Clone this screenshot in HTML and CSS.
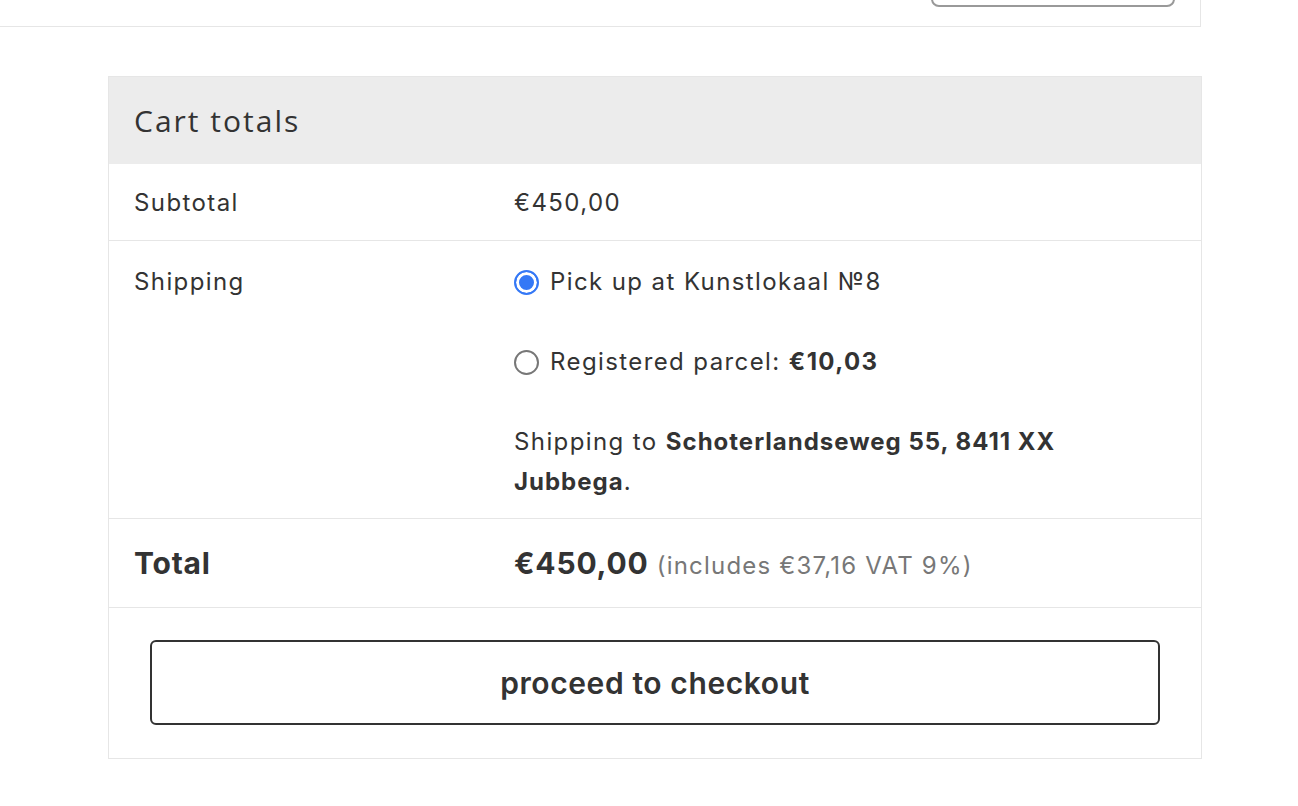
FILE: index.html
```html
<!DOCTYPE html>
<html lang="en">
<head>
    <meta charset="UTF-8">
    <meta name="viewport" content="width=device-width, initial-scale=1.0">
    <title>Cart</title>
    <link rel="stylesheet" href="styles.css">
</head>
<body>
    <!-- cart table ends just above -->
    <div class="cart-top">
        <div class="coupon-area">
            <button class="update-btn" aria-label="Update cart"></button>
        </div>
    </div>

    <div class="cart-totals">
        <h2>Cart totals</h2>

        <div class="row">
            <div class="label">Subtotal</div>
            <div class="value">€450,00</div>
        </div>

        <div class="row shipping">
            <div class="label">Shipping</div>
            <div class="value">
                <ul class="shipping-methods">
                    <li>
                        <input type="radio" name="shipping" id="pickup" checked>
                        <label for="pickup">Pick up at Kunstlokaal №8</label>
                    </li>
                    <li>
                        <input type="radio" name="shipping" id="parcel">
                        <label for="parcel">Registered parcel: <strong>€10,03</strong></label>
                    </li>
                </ul>
                <p class="destination">Shipping to <strong>Schoterlandseweg 55, 8411 XX</strong> <strong>Jubbega</strong>.</p>
            </div>
        </div>

        <div class="row total">
            <div class="label">Total</div>
            <div class="value"><strong>€450,00</strong> <small>(includes €37,16 VAT 9%)</small></div>
        </div>

        <div class="checkout">
            <button class="checkout-btn">proceed to checkout</button>
        </div>
    </div>
</body>
</html>
```

FILE: styles.css
```css
body {
    margin: 0;
    background: #fff;
    color: #333;
    font-family: 'Inter', 'Noto Sans', sans-serif;
    font-size: 24px;
    letter-spacing: 1.4px;
}

.cart-top {
    width: 1200px;
    height: 26px;
    border-right: 1px solid #e6e6e6;
    border-bottom: 1px solid #e6e6e6;
    overflow: hidden;
}

.coupon-area {
    display: flex;
    justify-content: flex-end;
    padding-right: 25px;
}

.update-btn {
    width: 244px;
    height: 60px;
    margin-top: -53px;
    border: 2px solid #999;
    border-radius: 8px;
    background: #fff;
}

.cart-totals {
    width: 1092px;
    margin: 49px 0 0 108px;
    border: 1px solid #e6e6e6;
}

h2 {
    margin: 0;
    height: 87px;
    padding: 0 25px;
    background: #ececec;
    font-family: 'Open Sans', sans-serif;
    font-weight: 400;
    font-size: 30px;
    letter-spacing: 2px;
    line-height: 87px;
    color: #333;
}

.row {
    display: grid;
    grid-template-columns: 380px 1fr;
    border-bottom: 1px solid #e6e6e6;
    line-height: 40px;
}

.label, .value {
    padding: 19px 25px 17px;
}

.shipping .label, .shipping .value {
    padding: 21px 25px 16px;
}

.shipping-methods {
    list-style: none;
    margin: 0;
    padding: 0;
}

.shipping-methods li {
    display: flex;
    align-items: center;
    margin-bottom: 40px;
}

.shipping-methods input {
    appearance: none;
    width: 25px;
    height: 25px;
    margin: 0 11px 0 0;
    border: 2px solid #777;
    border-radius: 50%;
    background: #fff;
}

.shipping-methods input:checked {
    border-color: #3478f6;
    background: #3478f6;
    box-shadow: inset 0 0 0 3px #fff;
}

.destination {
    margin: 0;
}

.destination strong {
    letter-spacing: 1px;
}

.total .label, .total .value {
    padding: 20px 25px 17px;
    line-height: 48px;
}

.total .label {
    font-size: 30px;
    font-weight: 700;
    letter-spacing: 0.8px;
}

.total strong {
    font-size: 30px;
    letter-spacing: 0.8px;
}

.total small {
    font-size: 24px;
    letter-spacing: 1.2px;
    color: #777;
}

.checkout {
    padding: 32px 41px 33px;
}

.checkout-btn {
    width: 100%;
    height: 85px;
    border: 2px solid #333;
    border-radius: 6px;
    background: #fff;
    color: #333;
    font-family: 'Inter', 'Noto Sans', sans-serif;
    font-size: 30px;
    font-weight: 600;
    letter-spacing: 0.6px;
    cursor: pointer;
}
```
